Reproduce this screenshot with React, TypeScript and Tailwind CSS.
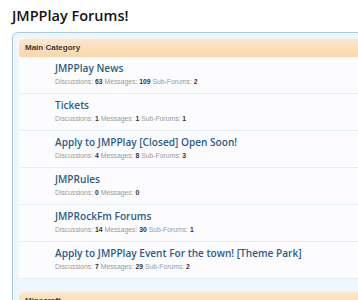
import React from "react";

type Forum = { name: string; d: number; m: number; s?: number };

const forums: Forum[] = [
  { name: "JMPPlay News", d: 63, m: 109, s: 2 },
  { name: "Tickets", d: 1, m: 1, s: 1 },
  { name: "Apply to JMPPlay [Closed] Open Soon!", d: 4, m: 8, s: 3 },
  { name: "JMPRules", d: 0, m: 0 },
  { name: "JMPRockFm Forums", d: 14, m: 30, s: 1 },
  { name: "Apply to JMPPlay Event For the town! [Theme Park]", d: 7, m: 29, s: 2 },
];

function Row({ f }: { f: Forum }) {
  return (
    <div className="h-[37px] border-b border-[#e3eef7] pl-[36px] pt-[4px]">
      <div className="text-[10.1px] leading-[15px] text-[#2b5d87] font-semibold whitespace-nowrap" style={{ fontFamily: "'Open Sans', sans-serif" }}>{f.name}</div>
      <div className="text-[6.8px] leading-[12px] text-[#999999]">
        Discussions: <span className="font-bold text-[#333]">{f.d}</span> Messages:{" "}
        <span className="font-bold text-[#333]">{f.m}</span>
        {f.s !== undefined && (
          <>
            {"  "}Sub-Forums: <span className="font-bold text-[#333]">{f.s}</span>
          </>
        )}
      </div>
    </div>
  );
}

export default function App() {
  return (
    <div className="w-[358px] h-[300px] overflow-hidden bg-white" style={{ fontFamily: "'Liberation Sans', Arial, sans-serif" }}>
      <div className="pl-[12px] pt-[6px] h-[32px] text-[14.5px] leading-[20px] text-[#141414]" style={{ fontFamily: "'Open Sans', sans-serif", fontWeight: 600 }}>JMPPlay Forums!</div>
      <div className="ml-[12px] w-[360px] rounded-[6px] border border-[#a5cae4] bg-[#f0f7fc] p-[6px] pr-0">
        <div className="h-[19px] rounded-l-[5px] bg-gradient-to-b from-[#fbe7cd] to-[#f8d6a9] border-b border-[#f0c996] pl-[6px] text-[8px] leading-[18px] text-[#3a3a3a] font-bold">
          Main Category
        </div>
        <div className="bg-[#fcfcff] -mt-px">
          {forums.map((f) => (
            <Row key={f.name} f={f} />
          ))}
        </div>
        <div className="h-[13px]" />
        <div className="h-[19px] rounded-l-[5px] bg-gradient-to-b from-[#fbe7cd] to-[#f8d6a9] pl-[6px] text-[8px] leading-[18px] text-[#3a3a3a] font-bold">
          Minecraft
        </div>
      </div>
    </div>
  );
}
